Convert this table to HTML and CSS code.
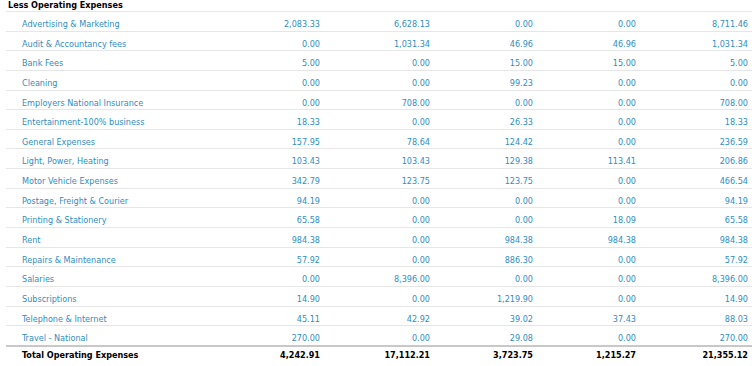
FILE: index.html
```html
<!DOCTYPE html>
<html>
<head>
<meta charset="utf-8">
<link rel="stylesheet" href="styles.css">
</head>
<body>
<table class="report">
  <colgroup>
    <col class="c-label"><col class="c-n1"><col class="c-n2"><col class="c-n3"><col class="c-n4"><col class="c-n5">
  </colgroup>
  <thead>
    <tr class="section"><th colspan="6">Less Operating Expenses</th></tr>
  </thead>
  <tbody>
    <tr><td>Advertising &amp; Marketing</td><td>2,083.33</td><td>6,628.13</td><td>0.00</td><td>0.00</td><td>8,711.46</td></tr>
    <tr><td>Audit &amp; Accountancy fees</td><td>0.00</td><td>1,031.34</td><td>46.96</td><td>46.96</td><td>1,031.34</td></tr>
    <tr><td>Bank Fees</td><td>5.00</td><td>0.00</td><td>15.00</td><td>15.00</td><td>5.00</td></tr>
    <tr><td>Cleaning</td><td>0.00</td><td>0.00</td><td>99.23</td><td>0.00</td><td>0.00</td></tr>
    <tr><td>Employers National Insurance</td><td>0.00</td><td>708.00</td><td>0.00</td><td>0.00</td><td>708.00</td></tr>
    <tr><td>Entertainment-100% business</td><td>18.33</td><td>0.00</td><td>26.33</td><td>0.00</td><td>18.33</td></tr>
    <tr><td>General Expenses</td><td>157.95</td><td>78.64</td><td>124.42</td><td>0.00</td><td>236.59</td></tr>
    <tr><td>Light, Power, Heating</td><td>103.43</td><td>103.43</td><td>129.38</td><td>113.41</td><td>206.86</td></tr>
    <tr><td>Motor Vehicle Expenses</td><td>342.79</td><td>123.75</td><td>123.75</td><td>0.00</td><td>466.54</td></tr>
    <tr><td>Postage, Freight &amp; Courier</td><td>94.19</td><td>0.00</td><td>0.00</td><td>0.00</td><td>94.19</td></tr>
    <tr><td>Printing &amp; Stationery</td><td>65.58</td><td>0.00</td><td>0.00</td><td>18.09</td><td>65.58</td></tr>
    <tr><td>Rent</td><td>984.38</td><td>0.00</td><td>984.38</td><td>984.38</td><td>984.38</td></tr>
    <tr><td>Repairs &amp; Maintenance</td><td>57.92</td><td>0.00</td><td>886.30</td><td>0.00</td><td>57.92</td></tr>
    <tr><td>Salaries</td><td>0.00</td><td>8,396.00</td><td>0.00</td><td>0.00</td><td>8,396.00</td></tr>
    <tr><td>Subscriptions</td><td>14.90</td><td>0.00</td><td>1,219.90</td><td>0.00</td><td>14.90</td></tr>
    <tr><td>Telephone &amp; Internet</td><td>45.11</td><td>42.92</td><td>39.02</td><td>37.43</td><td>88.03</td></tr>
    <tr><td>Travel - National</td><td>270.00</td><td>0.00</td><td>29.08</td><td>0.00</td><td>270.00</td></tr>
  </tbody>
  <tfoot>
    <tr class="total"><td>Total Operating Expenses</td><td>4,242.91</td><td>17,112.21</td><td>3,723.75</td><td>1,215.27</td><td>21,355.12</td></tr>
  </tfoot>
</table>
</body>
</html>
```
FILE: styles.css
```css
html, body {
  margin: 0;
  padding: 0;
  background: #ffffff;
}
.report {
  margin-left: 6px;
  width: 746px;
  border-collapse: collapse;
  table-layout: fixed;
  font-family: "DejaVu Sans Condensed", "DejaVu Sans", sans-serif;
  font-size: 9px;
}
.c-label { width: 208px; }
.c-n1 { width: 110px; }
.c-n2 { width: 110px; }
.c-n3 { width: 103px; }
.c-n4 { width: 103px; }
.c-n5 { width: 112px; }
.section th {
  text-align: left;
  font-weight: bold;
  color: #000;
  padding: 0 0 0 2px;
  height: 11px;
  line-height: 11px;
  border-bottom: 1px solid #e6e6e6;
  vertical-align: top;
}
tbody td {
  padding: 6px 4px 0.65px 0;
  line-height: 12px;
  vertical-align: top;
  color: #2f8dc2;
  text-align: right;
  border-bottom: 1px solid #e6e6e6;
  white-space: nowrap;
}
tbody td:first-child {
  text-align: left;
  padding-left: 16px;
}
.total td {
  height: 17px;
  padding: 0 4px 0 0;
  text-align: right;
  font-weight: bold;
  color: #000;
  border-top: 2px solid #c8c8c8;
}
.total td:first-child {
  text-align: left;
  padding-left: 16px;
}
```
